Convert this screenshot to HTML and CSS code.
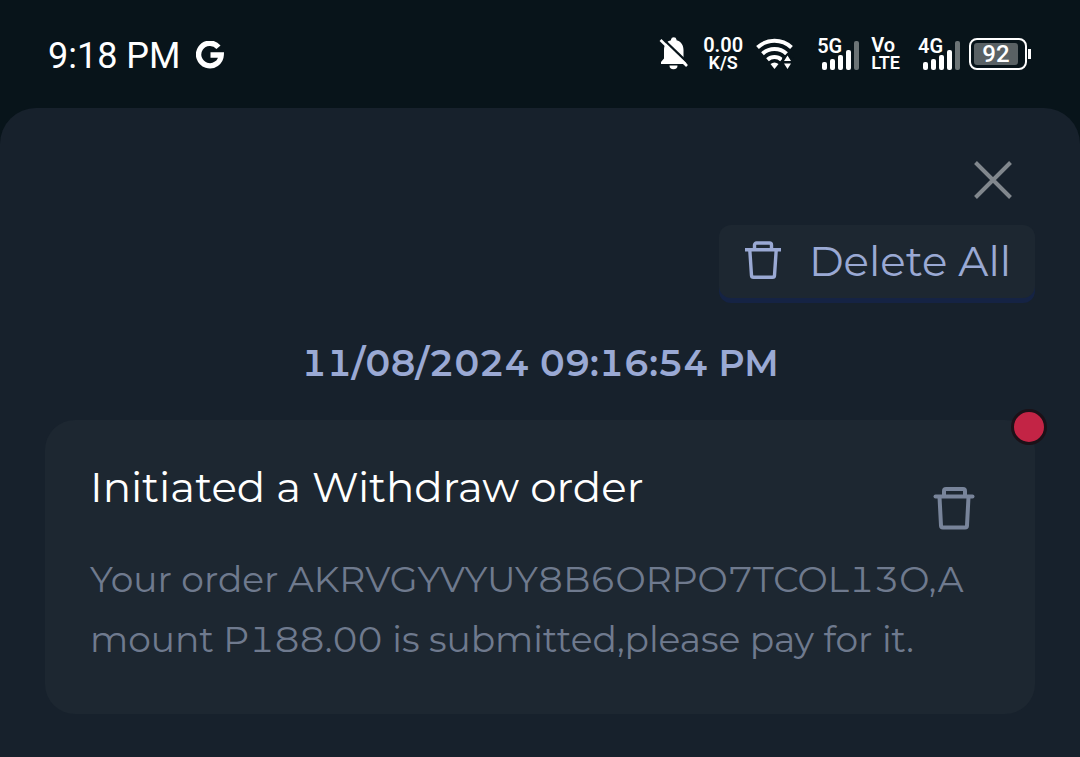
FILE: index.html
```html
<!DOCTYPE html>
<html lang="en">

<head>
    <meta charset="UTF-8">
    <meta name="viewport" content="width=device-width, initial-scale=1.0">
    <title>Notifications</title>
    <link rel="stylesheet" href="styles.css">
</head>

<body>
    <header class="status">
        <div class="status-left">
            <span class="time">9:18 PM</span>
            <svg class="logo" width="28" height="28" viewBox="0 0 28 28">
                <path d="M22.5 6.2A11.3 11.3 0 1 0 25.2 14H14.5" fill="none" stroke="#fff" stroke-width="5.4" />
            </svg>
        </div>
        <div class="status-right">
            <svg class="bell" width="30" height="34" viewBox="0 0 30 34">
                <path d="M2 27v-2l3-3.500V13C5 7.500 8 4 12 3.200V2.500a2.800 2.800 0 0 1 5.500 0v.7C22 4.200 24.500 8 24.500 13v8.500l3 3.500v2z" fill="#fff" />
                <path d="M10.500 28.500h8a4 3.800 0 0 1-8 0z" fill="#fff" />
                <path d="M3 1l27 26" stroke="#08141a" stroke-width="2.400" />
                <path d="M1.500 3l26.500 26" stroke="#fff" stroke-width="2.600" />
            </svg>
            <div class="stack speed"><span class="big">0.00</span><span>K/S</span></div>
            <svg class="wifi" width="38" height="32" viewBox="0 0 38 32">
                <g fill="none" stroke="#fff" stroke-width="4">
                    <path d="M1.500 9.500a25 25 0 0 1 34 0" />
                    <path d="M6.500 15.700a17.500 17.500 0 0 1 24 0" />
                    <path d="M11.500 21.700a10.500 10.500 0 0 1 14 0" />
                </g>
                <path d="M14.500 26q4-3.200 8 0L18.500 31z" fill="#fff" />
                <path d="M26 20.500l5.500-5 6.500 5V32H26z" fill="#08141a" />
                <path d="M28 23l3.500-5.500 3.500 5.500zM28 25.500h7l-3.500 5.500z" fill="#fff" />
            </svg>
            <div class="signal">
                <span class="net">5G</span>
                <svg width="43" height="32" viewBox="0 0 43 32">
                    <g fill="#fff">
                        <rect x="5" y="24" width="5" height="8" rx="2" />
                        <rect x="13" y="21" width="5" height="11" rx="2" />
                        <rect x="21" y="17" width="5" height="15" rx="2" />
                        <rect x="29" y="12" width="5" height="20" rx="2" />
                    </g>
                    <rect x="37" y="3" width="5" height="29" rx="2" fill="#6c7476" />
                </svg>
            </div>
            <div class="stack volte"><span class="big">Vo</span><span>LTE</span></div>
            <div class="signal">
                <span class="net">4G</span>
                <svg width="43" height="32" viewBox="0 0 43 32">
                    <g fill="#fff">
                        <rect x="5" y="24" width="5" height="8" rx="2" />
                        <rect x="13" y="21" width="5" height="11" rx="2" />
                        <rect x="21" y="17" width="5" height="15" rx="2" />
                        <rect x="29" y="12" width="5" height="20" rx="2" />
                    </g>
                    <rect x="37" y="3" width="5" height="29" rx="2" fill="#6c7476" />
                </svg>
            </div>
            <div class="battery"><span class="level">92</span></div>
        </div>
    </header>

    <main class="panel">
        <div class="tools">
            <button class="close" type="button" aria-label="Close">
                <svg width="40" height="40" viewBox="0 0 40 40">
                    <path d="M2.500 2.500l35 35M37.500 2.500l-35 35" stroke="#81878d" stroke-width="4" />
                </svg>
            </button>
            <button class="delete-all" type="button">
                <svg width="36" height="40" viewBox="0 0 36 40">
                    <g fill="none" stroke="currentColor" stroke-width="3.400" stroke-linejoin="round">
                        <path d="M0 8.700h36" />
                        <path d="M9.500 8V4a2 2 0 0 1 2-2h13a2 2 0 0 1 2 2v4" />
                        <path d="M4.800 9l1.700 25.500a2 2 0 0 0 2 1.800h19a2 2 0 0 0 2-1.800L31.200 9" />
                    </g>
                </svg>
                <span>Delete All</span>
            </button>
        </div>

        <time class="date">11/08/2024 09:16:54 PM</time>

        <article class="card">
            <span class="dot"></span>
            <div class="card-head">
                <h2>Initiated a Withdraw order</h2>
                <button class="remove" type="button" aria-label="Delete">
                    <svg width="42" height="46" viewBox="0 0 42 46">
                        <g fill="none" stroke="currentColor" stroke-width="4" stroke-linejoin="round" stroke-linecap="round">
                            <path d="M2.500 11.500h37" />
                            <path d="M11 11V6a2 2 0 0 1 2-2h17a2 2 0 0 1 2 2v5" />
                            <path d="M6.500 12l1.500 28.500a2 2 0 0 0 2 2h22a2 2 0 0 0 2-2L35.500 12" />
                        </g>
                    </svg>
                </button>
            </div>
            <p>Your order AKRVGYVYUY8B6ORPO7TCOL13O,Amount P188.00 is submitted,please pay for it.</p>
        </article>
    </main>
</body>

</html>
```
FILE: styles.css
```css
* {
    margin: 0;
    padding: 0;
    box-sizing: border-box;
}

html,
body {
    height: 100%;
}

body {
    display: flex;
    flex-direction: column;
    background-color: #08141a;
    color: #fff;
    font-family: Montserrat, Inter, sans-serif;
    font-variant-numeric: tabular-nums;
}

button {
    border: none;
    background: none;
    font: inherit;
    cursor: pointer;
}

svg {
    display: block;
}

/* status bar */
.status {
    display: flex;
    flex: none;
    justify-content: space-between;
    align-items: center;
    height: 108px;
    padding: 0 48px;
    font-family: Roboto, sans-serif;
}

.status-left,
.status-right {
    display: flex;
    align-items: center;
}

.status-left {
    gap: 15px;
    padding-top: 2px;
}

.time {
    padding-top: 2px;
    font-size: 36px;
    line-height: 44px;
}

.stack {
    display: flex;
    flex-direction: column;
    align-items: center;
    font-size: 18px;
    font-weight: 600;
    line-height: 18px;
}

.stack .big {
    font-size: 20px;
}

.speed {
    margin: 0 13px 0 14px;
}

.volte {
    align-items: flex-start;
    margin: 0 18px 0 11px;
}

.wifi {
    margin-right: 23px;
}

.signal {
    position: relative;
}

.net {
    position: absolute;
    left: 0;
    top: 0;
    font-size: 20px;
    font-weight: 600;
    line-height: 16px;
}

.battery {
    position: relative;
    width: 58px;
    height: 32px;
    margin: 0 5px 0 8px;
    padding: 3px 7px 3px 3px;
    border: 2px solid #fff;
    border-radius: 8px;
}

.battery::after {
    content: "";
    position: absolute;
    right: -6px;
    top: 9px;
    width: 3px;
    height: 10px;
    background-color: #fff;
}

.level {
    display: block;
    border-radius: 3px;
    background-color: #596164;
    font-size: 24px;
    font-weight: 500;
    line-height: 22px;
    text-align: center;
}

/* notification panel */
.panel {
    flex: 1;
    padding: 52px 45px 43px;
    border-radius: 36px 36px 0 0;
    background-color: #17212c;
}

.tools {
    display: flex;
    flex-direction: column;
    align-items: flex-end;
    gap: 25px;
}

.close {
    margin-right: 22px;
}

.delete-all {
    display: flex;
    align-items: center;
    gap: 28px;
    height: 73px;
    padding: 0 24px 2px 26px;
    border-radius: 12px;
    background-color: #1d2731;
    box-shadow: 0 5px 0 #152344;
    color: #9aa9d4;
    font-size: 42px;
}

.date {
    display: block;
    margin-top: 41px;
    color: #9aa9d4;
    font-size: 36px;
    font-weight: 600;
    line-height: 48px;
    text-align: center;
}

.card {
    position: relative;
    margin-top: 33px;
    padding: 41px 45px 45px;
    border-radius: 30px;
    background-color: #1d2731;
}

.dot {
    position: absolute;
    right: -12px;
    top: -11px;
    width: 36px;
    height: 36px;
    border: 3px solid #1b1118;
    border-radius: 50%;
    background-color: #c32445;
}

.card-head {
    display: flex;
    justify-content: space-between;
    align-items: flex-end;
    height: 70px;
    padding-right: 15px;
}

.card h2 {
    align-self: flex-start;
    font-size: 42px;
    font-weight: 400;
    line-height: 52px;
}

.remove {
    color: #78849a;
}

.card p {
    margin-top: 18px;
    color: #6f7a8e;
    font-size: 36px;
    line-height: 60px;
    word-break: break-all;
}
```
